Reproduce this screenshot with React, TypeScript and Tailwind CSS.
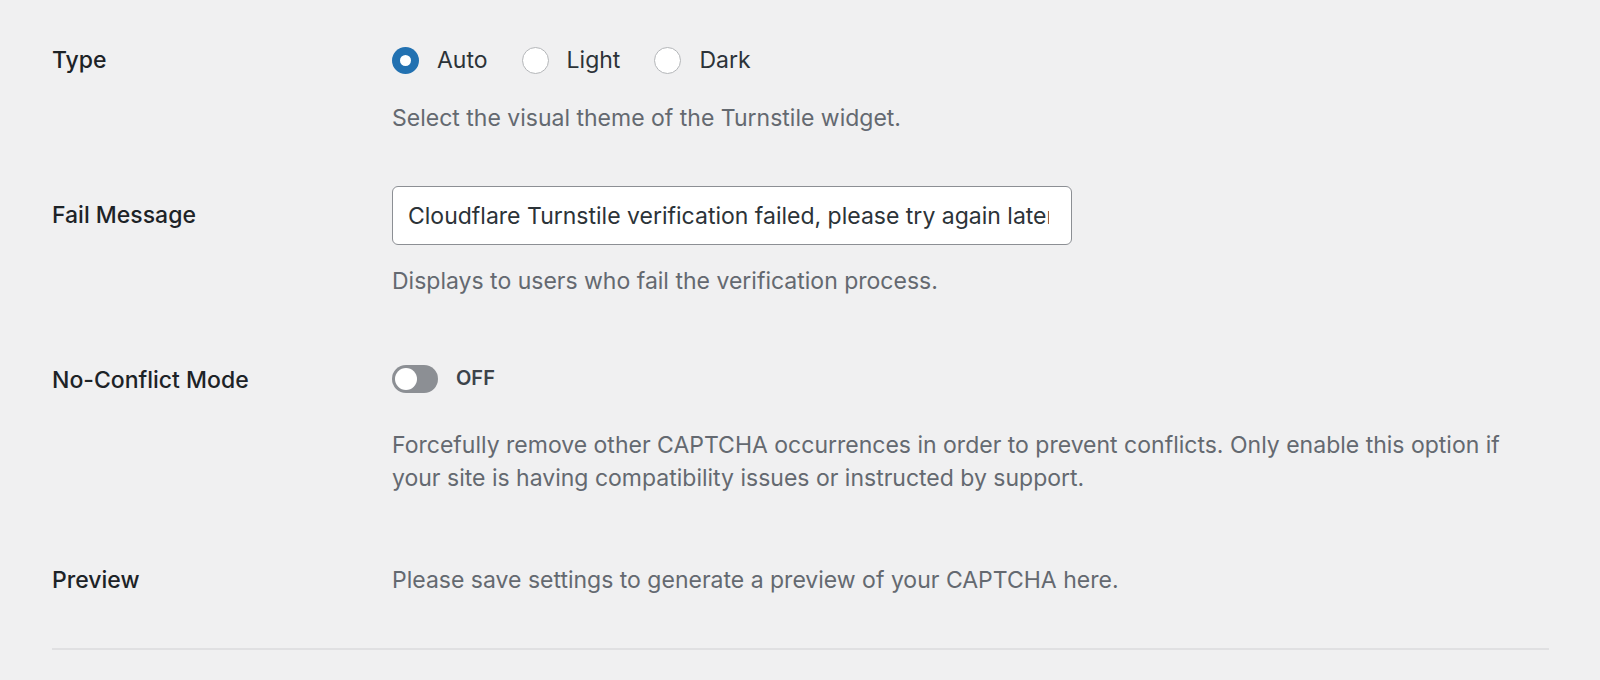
import React from 'react';

const font = { fontFamily: 'Inter, "Noto Sans", sans-serif' };

function Radio({ label, checked }: { label: string; checked?: boolean }) {
  return (
    <label className="flex items-center gap-[18px] mr-[34px]">
      {checked ? (
        <span className="w-[27px] h-[27px] rounded-full bg-[#2271b1] flex items-center justify-center">
          <span className="w-[11px] h-[11px] rounded-full bg-white" />
        </span>
      ) : (
        <span className="w-[27px] h-[27px] rounded-full bg-white border border-[#b4b6b9]" />
      )}
      <span className="text-[#2c3338]">{label}</span>
    </label>
  );
}

function Row({ label, labelH, className, children }: { label: string; labelH: string; className: string; children: React.ReactNode }) {
  return (
    <div className={`grid grid-cols-[340px_1fr] items-start ${className}`}>
      <div className={`flex items-center font-medium text-[#1d2327] ${labelH}`}>{label}</div>
      <div>{children}</div>
    </div>
  );
}

export default function App() {
  return (
    <div className="min-h-[680px] bg-[#f0f0f1] pl-[52px] pr-[51px] text-[23px] leading-[33px]" style={font}>
      {/* Type */}
      <Row label="Type" labelH="h-[33px]" className="pt-[44px]">
        <div className="flex items-center h-[33px]">
          <Radio label="Auto" checked />
          <Radio label="Light" />
          <Radio label="Dark" />
        </div>
        <p className="mt-[25px] text-[#646970]">Select the visual theme of the Turnstile widget.</p>
      </Row>

      {/* Fail Message */}
      <Row label="Fail Message" labelH="h-[59px]" className="mt-[51px]">
        <input
          readOnly
          value="Cloudflare Turnstile verification failed, please try again later."
          className="w-[680px] h-[59px] pl-[15px] pr-[22px] bg-white border border-[#8c8f94] rounded-[6px] text-[#2c3338] outline-none"
        />
        <p className="mt-[20px] text-[#646970]">Displays to users who fail the verification process.</p>
      </Row>

      {/* No-Conflict Mode */}
      <Row label="No-Conflict Mode" labelH="h-[37px]" className="mt-[64px]">
        <div className="flex items-center h-[33px]">
          <span className="w-[46px] h-[28px] rounded-full bg-[#8c8f94] flex items-center px-[3px]">
            <span className="w-[22px] h-[22px] rounded-full bg-white" />
          </span>
          <span className="ml-[18px] text-[20px] font-semibold text-[#3c434a]">OFF</span>
        </div>
        <p className="mt-[34px] pr-[20px] text-[#646970]">
          Forcefully remove other CAPTCHA occurrences in order to prevent conflicts. Only enable this option if your site is having compatibility issues or instructed by support.
        </p>
      </Row>

      {/* Preview */}
      <Row label="Preview" labelH="h-[33px]" className="mt-[69px]">
        <p className="text-[#646970]">Please save settings to generate a preview of your CAPTCHA here.</p>
      </Row>

      <div className="mt-[51px] h-[2px] bg-[#e0e0e2]" />
    </div>
  );
}
